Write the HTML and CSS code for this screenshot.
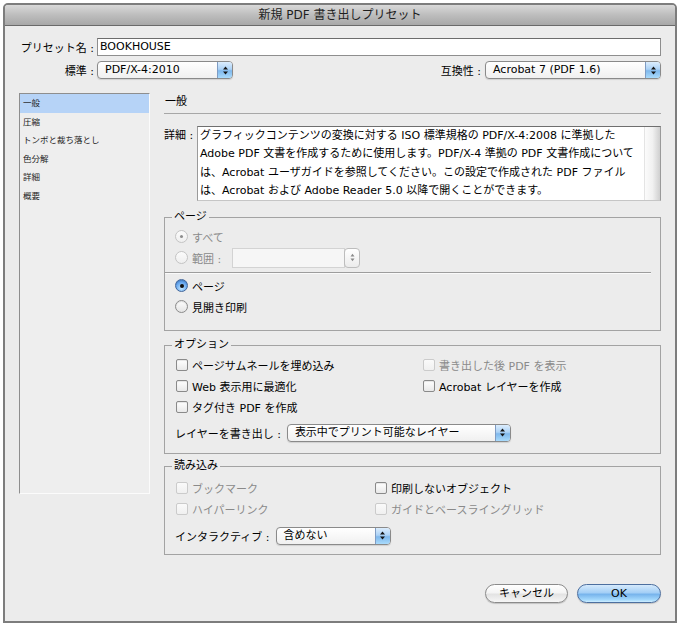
FILE: index.html
```html
<!DOCTYPE html>
<html lang="ja">
<head>
<meta charset="utf-8">
<title>新規 PDF 書き出しプリセット</title>
<link rel="stylesheet" href="styles.css">
</head>
<body>
<div class="window">
  <div class="titlebar">新規 PDF 書き出しプリセット</div>
  <div class="content">
    <div class="toprow">
      <span class="toplabel">プリセット名 :</span>
      <div class="textfield">BOOKHOUSE</div>
    </div>
    <div class="toprow row2">
      <span class="toplabel">標準 :</span>
      <div class="popup popup-std">
        <span class="popup-text">PDF/X-4:2010</span>
        <span class="popup-btn"><svg width="5" height="9" viewBox="0 0 5 9"><path d="M0 3.6 L2.5 0.4 L5 3.6Z M0 5.4 L2.5 8.6 L5 5.4Z" fill="#151515"/></svg></span>
      </div>
      <span class="compat-label">互換性 :</span>
      <div class="popup popup-compat">
        <span class="popup-text">Acrobat 7 (PDF 1.6)</span>
        <span class="popup-btn"><svg width="5" height="9" viewBox="0 0 5 9"><path d="M0 3.6 L2.5 0.4 L5 3.6Z M0 5.4 L2.5 8.6 L5 5.4Z" fill="#151515"/></svg></span>
      </div>
    </div>

    <div class="main">
      <ul class="sidebar">
        <li class="selected">一般</li>
        <li>圧縮</li>
        <li>トンボと裁ち落とし</li>
        <li>色分解</li>
        <li>詳細</li>
        <li>概要</li>
      </ul>

      <div class="pane">
        <div class="pane-title">一般</div>

        <div class="detail">
          <span class="detail-label">詳細 :</span>
          <div class="desc">
            <div class="desc-text">グラフィックコンテンツの変換に対する ISO 標準規格の PDF/X-4:2008 に準拠した<br>Adobe PDF 文書を作成するために使用します。PDF/X-4 準拠の PDF 文書作成について<br>は、Acrobat ユーザガイドを参照してください。この設定で作成された PDF ファイル<br>は、Acrobat および Adobe Reader 5.0 以降で開くことができます。</div>
            <div class="desc-scroll"></div>
          </div>
        </div>

        <fieldset class="group group-page">
          <legend>ページ</legend>
          <div class="opt"><span class="radio dis on"></span><span class="dim">すべて</span></div>
          <div class="opt">
            <span class="radio dis"></span><span class="dim">範囲 :</span>
            <div class="range">
              <div class="range-field"></div>
              <div class="stepper"><svg width="5" height="9" viewBox="0 0 5 9"><path d="M0.5 3.4 L2.5 0.8 L4.5 3.4Z M0.5 5.6 L2.5 8.2 L4.5 5.6Z" fill="#8a8a8a"/></svg></div>
            </div>
          </div>
          <div class="sep"></div>
          <div class="opt"><span class="radio on"></span><span>ページ</span></div>
          <div class="opt"><span class="radio"></span><span>見開き印刷</span></div>
        </fieldset>

        <fieldset class="group group-options">
          <legend>オプション</legend>
          <div class="grid grid-options">
            <div class="opt"><span class="check"></span><span>ページサムネールを埋め込み</span></div>
            <div class="opt"><span class="check dis"></span><span class="dim">書き出した後 PDF を表示</span></div>
            <div class="opt"><span class="check"></span><span>Web 表示用に最適化</span></div>
            <div class="opt"><span class="check"></span><span>Acrobat レイヤーを作成</span></div>
            <div class="opt"><span class="check"></span><span>タグ付き PDF を作成</span></div>
          </div>
          <div class="selrow">
            <span>レイヤーを書き出し :</span>
            <div class="popup popup-layer">
              <span class="popup-text">表示中でプリント可能なレイヤー</span>
              <span class="popup-btn"><svg width="5" height="9" viewBox="0 0 5 9"><path d="M0 3.6 L2.5 0.4 L5 3.6Z M0 5.4 L2.5 8.6 L5 5.4Z" fill="#151515"/></svg></span>
            </div>
          </div>
        </fieldset>

        <fieldset class="group group-import">
          <legend>読み込み</legend>
          <div class="grid grid-import">
            <div class="opt"><span class="check dis"></span><span class="dim">ブックマーク</span></div>
            <div class="opt"><span class="check"></span><span>印刷しないオブジェクト</span></div>
            <div class="opt"><span class="check dis"></span><span class="dim">ハイパーリンク</span></div>
            <div class="opt"><span class="check dis"></span><span class="dim">ガイドとベースライングリッド</span></div>
          </div>
          <div class="selrow selrow-import">
            <span>インタラクティブ :</span>
            <div class="popup popup-inter">
              <span class="popup-text">含めない</span>
              <span class="popup-btn"><svg width="5" height="9" viewBox="0 0 5 9"><path d="M0 3.6 L2.5 0.4 L5 3.6Z M0 5.4 L2.5 8.6 L5 5.4Z" fill="#151515"/></svg></span>
            </div>
          </div>
        </fieldset>
      </div>
    </div>

    <div class="buttons">
      <div class="btn">キャンセル</div>
      <div class="btn btn-default">OK</div>
    </div>
  </div>
</div>
</body>
</html>
```

FILE: styles.css
```css
* { box-sizing: border-box; }

body {
  margin: 0;
  background: #ffffff;
  font-family: "DejaVu Sans", "Noto Sans CJK JP", sans-serif;
  font-size: 11px;
  color: #000;
}

.window {
  margin: 3px;
  width: 674px;
  height: 620px;
  border: 2px solid #7d7d7d;
  border-radius: 5px 5px 0 0;
  background: #ececec;
  overflow: hidden;
}

.titlebar {
  height: 21px;
  line-height: 20px;
  border-bottom: 1px solid #6a6a6a;
  background: linear-gradient(#d9d9d9, #bdbdbd 50%, #a8a8a8);
  text-align: center;
  font-size: 12px;
  color: #1e1e1e;
}

.content { padding: 12px 14px 0; }

.toprow {
  display: flex;
  align-items: center;
  height: 18px;
}
.row2 { margin-top: 5px; }

.toplabel {
  flex: none;
  width: 78px;
  padding-right: 3px;
  text-align: right;
  white-space: nowrap;
}

.textfield {
  flex: 1;
  height: 18px;
  border: 1px solid #8e8e8e;
  border-top-color: #6c6c6c;
  background: #fff;
  padding-left: 2px;
  line-height: 16px;
}

.popup {
  display: flex;
  height: 18px;
  border: 1px solid #8a8a8a;
  border-radius: 4px;
  background: linear-gradient(#ffffff, #f0f0f0);
  box-shadow: 0 1px 1px rgba(0,0,0,0.12);
  flex: none;
}
.popup-text {
  flex: 1;
  padding-left: 7px;
  line-height: 16px;
  white-space: nowrap;
  overflow: hidden;
}
.popup-btn {
  width: 15px;
  border-left: 1px solid #7f9cc3;
  border-radius: 0 3px 3px 0;
  background: linear-gradient(#dcedfd, #acd2f6 45%, #7fb8ec 55%, #a9dbfc);
  display: flex;
  align-items: center;
  justify-content: center;
}
.popup-std { width: 136px; }
.popup-compat { width: 176px; }
.popup-layer { width: 224px; margin-left: 6px; }
.popup-inter { width: 115px; margin-left: 6px; }

.compat-label { margin-left: auto; margin-right: 4px; }

.main {
  display: flex;
  align-items: flex-start;
  gap: 14px;
  margin-top: 14px;
}

.sidebar {
  list-style: none;
  margin: 0;
  padding: 0;
  flex: none;
  width: 131px;
  height: 401px;
  border: 1px solid;
  border-color: #8e8e8e #fbfbfb #fbfbfb #8e8e8e;
  background: #eeeeee;
  font-size: 8.5px;
  color: #1c1c1c;
}
.sidebar li {
  height: 18.6px;
  line-height: 18.6px;
  padding-left: 3px;
  white-space: nowrap;
}
.sidebar li.selected { background: #b6d3f7; }

.pane { width: 497px; flex: none; }

.pane-title {
  line-height: 18px;
  padding: 0 0 2px 1px;
  border-bottom: 1px solid #a7a7a7;
}

.detail { display: flex; margin-top: 12px; }
.detail-label {
  flex: none;
  width: 33px;
  line-height: 18.3px;
  padding-top: 1px;
  white-space: nowrap;
}
.desc {
  flex: 1;
  display: flex;
  height: 75px;
  border: 1px solid #9a9a9a;
  border-top-color: #6f6f6f;
  border-bottom-color: #c6c6c6;
  background: #fff;
}
.desc-text {
  flex: 1;
  padding-left: 2px;
  line-height: 18.3px;
  white-space: nowrap;
  overflow: hidden;
}
.desc-scroll {
  width: 16px;
  border-left: 1px solid #e4e4e4;
  background: linear-gradient(to right, #fbfbfb, #f1f1f1 50%, #cfcfcf);
}

.group {
  margin: 0;
  padding: 2px 10px 13px 10px;
  border: 1px solid #a3a3a3;
  min-width: 0;
}
.group legend {
  padding: 0 2px;
  margin-left: -3px;
  line-height: 14px;
  height: 14px;
}
.group-page { margin-top: 9px; }
.group-options { margin-top: 7px; padding-bottom: 10px; }
.group-import { margin-top: 5px; padding-top: 4px; padding-bottom: 8px; }

.opt {
  display: flex;
  align-items: center;
  gap: 4px;
  height: 21px;
  white-space: nowrap;
}

.dim { color: #8a8a8a; }

.radio {
  flex: none;
  width: 13px;
  height: 13px;
  border-radius: 50%;
  border: 1px solid #8b8b8b;
  background: linear-gradient(#fdfdfd, #e4e4e4);
  box-shadow: inset 0 1px 1px rgba(0,0,0,0.12);
  display: flex;
  align-items: center;
  justify-content: center;
}
.radio.dis {
  border-color: #c4c4c4;
  background: linear-gradient(#fbfbfb, #efefef);
  box-shadow: none;
}
.radio.on {
  border-color: #41659a;
  background: radial-gradient(circle at 50% 75%, #c2e6ff, #6aaaf0 55%, #3d7fd0);
}
.radio.on::after {
  content: "";
  width: 4px;
  height: 4px;
  border-radius: 50%;
  background: #111;
}
.radio.dis.on {
  border-color: #c4c4c4;
  background: linear-gradient(#fbfbfb, #efefef);
}
.radio.dis.on::after { background: #8d8d8d; width: 3px; height: 3px; }

.range { display: flex; margin-left: 7px; }
.range-field {
  width: 113px;
  height: 20px;
  border: 1px solid #d3d3d3;
  background: #f6f6f6;
}
.stepper {
  width: 16px;
  height: 20px;
  margin-left: -1px;
  border: 1px solid #bdbdbd;
  border-radius: 4px;
  background: linear-gradient(#ffffff, #ececec);
  display: flex;
  align-items: center;
  justify-content: center;
}

.sep {
  width: 486px;
  height: 1px;
  margin: 4px 0 2px -10px;
  background: #9d9d9d;
  box-shadow: 0 1px 0 #fafafa;
}

.check {
  flex: none;
  width: 12px;
  height: 12px;
  margin-left: 1px;
  border: 1px solid #8a8a8a;
  border-radius: 2px;
  background: linear-gradient(#ffffff, #e9e9e9);
  box-shadow: inset 0 1px 1px rgba(0,0,0,0.1);
}
.check.dis {
  border-color: #cbcbcb;
  background: linear-gradient(#fafafa, #f0f0f0);
  box-shadow: none;
}

.grid { display: grid; }
.grid-options { grid-template-columns: 247px 1fr; }
.grid-import { grid-template-columns: 199px 1fr; }

.selrow {
  display: flex;
  align-items: center;
  height: 21px;
  margin-top: 5px;
  white-space: nowrap;
}
.selrow-import { margin-top: 6px; }

.buttons {
  display: flex;
  justify-content: flex-end;
  gap: 9px;
  margin-top: 29px;
}
.btn {
  width: 83px;
  height: 19px;
  border-radius: 10px;
  border: 1px solid #8b8b8b;
  background: linear-gradient(#ffffff, #f4f4f4 45%, #e3e3e3 55%, #f6f6f6);
  box-shadow: 0 1px 1px rgba(0,0,0,0.18);
  text-align: center;
  line-height: 17px;
}
.btn-default {
  width: 84px;
  border-color: #4d6f9f;
  background: linear-gradient(#d5eafc, #a4cff6 45%, #77b4ec 55%, #a6dafd 88%, #cfeefe);
}
```
